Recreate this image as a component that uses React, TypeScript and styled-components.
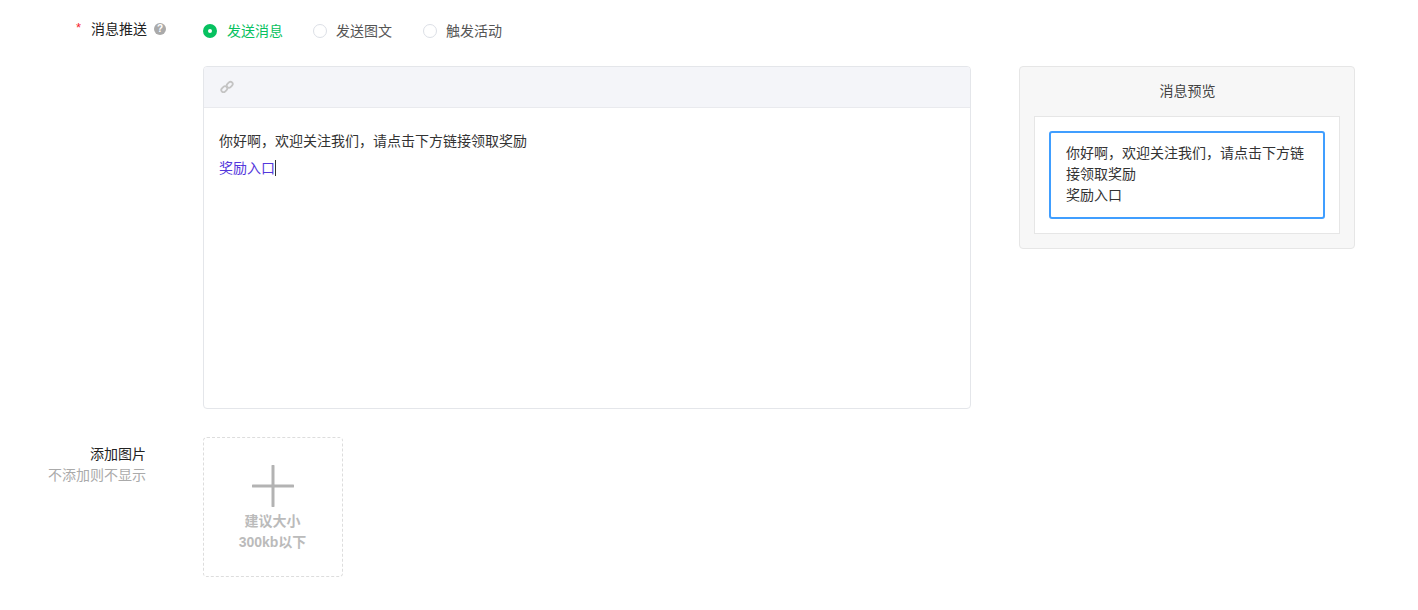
import { FC } from 'react';
import styled, { createGlobalStyle } from 'styled-components';

const GlobalStyle = createGlobalStyle`
  html, body {
    margin: 0;
    padding: 0;
    background: #fff;
    font-family: "Liberation Sans", "Noto Sans CJK SC", sans-serif;
    font-size: 14px;
    color: #333;
  }
`;

const Page = styled.div`
  width: 1418px;
  height: 610px;
  padding-top: 19px;
  box-sizing: border-box;
  overflow: hidden;
`;

const FormRow = styled.div`
  display: flex;
  align-items: flex-start;
`;

const Label = styled.div`
  width: 146px;
  flex: none;
  margin-right: 57px;
  text-align: right;
  line-height: 21px;
  color: #222;
`;

const PushLabel = styled.div`
  display: flex;
  align-items: center;
  flex: none;
  box-sizing: border-box;
  width: 203px;
  height: 17px;
  padding-left: 76px;
  white-space: nowrap;
  color: #222;
`;

const Required = styled.span`
  flex: none;
  width: 15px;
  color: #f5222d;
  font-size: 13px;
`;

const HelpIcon = styled.span`
  display: inline-flex;
  flex: none;
  align-items: center;
  justify-content: center;
  width: 12px;
  height: 12px;
  margin: 3px 0 0 7px;
  border-radius: 50%;
  background: #aaa;
  color: #fff;
  font-size: 10px;
  font-weight: 700;
  line-height: 12px;
`;

const RadioGroup = styled.div`
  display: flex;
  height: 22px;
`;

const RadioItem = styled.label<{ $checked?: boolean }>`
  display: flex;
  align-items: center;
  width: 110px;
  color: ${({ $checked }) => ($checked ? '#07c160' : '#555')};
`;

const RadioDot = styled.span<{ $checked?: boolean }>`
  box-sizing: border-box;
  width: 14px;
  height: 14px;
  margin-top: 2px;
  margin-right: ${({ $checked }) => ($checked ? '10px' : '9px')};
  border-radius: 50%;
  background: #fff;
  border: ${({ $checked }) =>
    $checked ? '5px solid #07c160' : '1px solid #dcdfe6'};
`;

const EditorRow = styled.div`
  display: flex;
  align-items: flex-start;
  gap: 48px;
  margin: 25px 0 28px 203px;
`;

const Editor = styled.div`
  box-sizing: border-box;
  width: 768px;
  height: 343px;
  border: 1px solid #e4e6ea;
  border-radius: 4px;
  overflow: hidden;
`;

const Toolbar = styled.div`
  display: flex;
  align-items: center;
  box-sizing: border-box;
  height: 41px;
  padding-left: 16px;
  background: #f4f5f9;
  border-bottom: 1px solid #e9eaee;
`;

const EditorBody = styled.div`
  padding: 20px 15px;
  line-height: 27px;
  color: #333;
`;

const LinkText = styled.span`
  color: #5438dc;
  border-right: 1px solid #333;
`;

const Preview = styled.div`
  box-sizing: border-box;
  width: 336px;
  height: 183px;
  padding: 0 14px 14px;
  background: #f7f7f7;
  border: 1px solid #e6e6e6;
  border-radius: 4px;
`;

const PreviewTitle = styled.div`
  height: 49px;
  padding-left: 1px;
  line-height: 48px;
  text-align: center;
  color: #444;
`;

const PreviewFrame = styled.div`
  box-sizing: border-box;
  height: 118px;
  padding: 14px;
  background: #fff;
  border: 1px solid #e6e6e6;
`;

const Bubble = styled.div`
  box-sizing: border-box;
  height: 88px;
  padding: 10px 15px;
  border: 2px solid #409eff;
  border-radius: 3px;
  line-height: 21px;
  color: #333;
`;

const ImageLabel = styled(Label)`
  padding-top: 7px;
`;

const Hint = styled.div`
  color: #aaa;
`;

const Upload = styled.div`
  box-sizing: border-box;
  display: flex;
  flex-direction: column;
  align-items: center;
  width: 140px;
  height: 140px;
  padding-top: 27px;
  padding-right: 1px;
  border: 1px dashed #ddd;
  border-radius: 4px;
  color: #bbb;
  font-weight: 700;
  line-height: 21px;
  text-align: center;
`;

const PlusIcon = styled.svg`
  display: block;
  margin-bottom: 4px;
`;

const LinkIcon: FC = () => (
  <svg width="14" height="14" viewBox="0 0 14 14" fill="none" stroke="#c4c4c4" strokeWidth="1.8">
    <rect x="1" y="7" width="6.5" height="4.4" rx="2.2" transform="rotate(-45 4.3 9.2)" />
    <rect x="6.5" y="2.6" width="6.5" height="4.4" rx="2.2" transform="rotate(-45 9.7 4.8)" />
  </svg>
);

const App: FC = () => {
  return (
    <Page>
      <GlobalStyle />
      <FormRow>
        <PushLabel>
          <Required>*</Required>
          消息推送
          <HelpIcon>?</HelpIcon>
        </PushLabel>
        <RadioGroup>
          <RadioItem $checked>
            <RadioDot $checked />
            发送消息
          </RadioItem>
          <RadioItem>
            <RadioDot />
            发送图文
          </RadioItem>
          <RadioItem>
            <RadioDot />
            触发活动
          </RadioItem>
        </RadioGroup>
      </FormRow>
      <EditorRow>
        <Editor>
          <Toolbar>
            <LinkIcon />
          </Toolbar>
          <EditorBody>
            <div>你好啊，欢迎关注我们，请点击下方链接领取奖励</div>
            <div>
              <LinkText>奖励入口</LinkText>
            </div>
          </EditorBody>
        </Editor>
        <Preview>
          <PreviewTitle>消息预览</PreviewTitle>
          <PreviewFrame>
            <Bubble>
              你好啊，欢迎关注我们，请点击下方链接领取奖励
              <br />
              奖励入口
            </Bubble>
          </PreviewFrame>
        </Preview>
      </EditorRow>
      <FormRow>
        <ImageLabel>
          添加图片
          <Hint>不添加则不显示</Hint>
        </ImageLabel>
        <Upload>
          <PlusIcon width="42" height="42" viewBox="0 0 42 42">
            <path d="M21 1v40M1 21h40" stroke="#b3b3b3" strokeWidth="3" strokeLinecap="round" />
          </PlusIcon>
          建议大小
          <br />
          300kb以下
        </Upload>
      </FormRow>
    </Page>
  );
};

export default App;
